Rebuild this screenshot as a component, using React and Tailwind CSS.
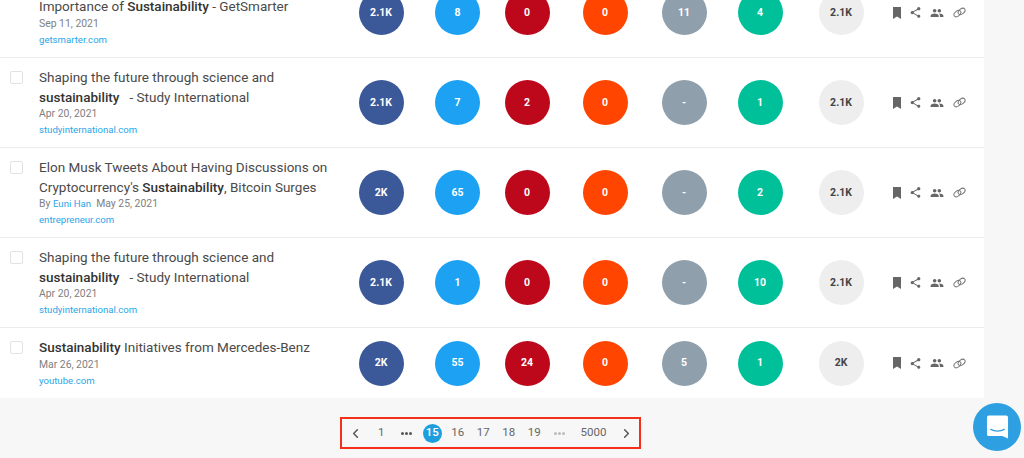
import React from 'react';
import { MdShare, MdPeople } from 'react-icons/md';
import { ChevronLeft, ChevronRight } from 'lucide-react';

const rows = [
  {
    title: <>Importance of <b>Sustainability</b> - GetSmarter</>,
    date: 'Sep 11, 2021',
    domain: 'getsmarter.com',
    stats: ['2.1K', '8', '0', '0', '11', '4', '2.1K'],
    first: true,
  },
  {
    title: <>Shaping the future through science and <b>sustainability</b> &nbsp; - Study International</>,
    date: 'Apr 20, 2021',
    domain: 'studyinternational.com',
    stats: ['2.1K', '7', '2', '0', '-', '1', '2.1K'],
  },
  {
    title: <>Elon Musk Tweets About Having Discussions on Cryptocurrency's <b>Sustainability</b>, Bitcoin Surges</>,
    author: 'Euni Han',
    date: 'May 25, 2021',
    domain: 'entrepreneur.com',
    stats: ['2K', '65', '0', '0', '-', '2', '2.1K'],
  },
  {
    title: <>Shaping the future through science and <b>sustainability</b> &nbsp; - Study International</>,
    date: 'Apr 20, 2021',
    domain: 'studyinternational.com',
    stats: ['2.1K', '1', '0', '0', '-', '10', '2.1K'],
  },
  {
    title: <><b>Sustainability</b> Initiatives from Mercedes-Benz</>,
    date: 'Mar 26, 2021',
    domain: 'youtube.com',
    stats: ['2K', '55', '24', '0', '5', '1', '2K'],
    last: true,
  },
];

const circleColors = [
  'bg-[#3b5998] text-white',
  'bg-[#1da1f2] text-white',
  'bg-[#bd081c] text-white',
  'bg-[#ff4500] text-white',
  'bg-[#8f9fac] text-white',
  'bg-[#00c09a] text-white',
  'bg-[#eeeeee] text-[#444444]',
];

function BookmarkIcon() {
  return (
    <svg width="8" height="12" viewBox="0 0 8 12">
      <path d="M0 0h8v12L4 9.6 0 12z" fill="currentColor" />
    </svg>
  );
}

function ChainIcon() {
  return (
    <svg width="13" height="11" viewBox="0 0 13 11" fill="none" stroke="#777777" strokeWidth="1">
      <ellipse cx="4.4" cy="6.6" rx="3.9" ry="2.5" transform="rotate(-38 4.4 6.6)" />
      <ellipse cx="8.6" cy="4.4" rx="3.9" ry="2.5" transform="rotate(-38 8.6 4.4)" />
    </svg>
  );
}

function Row({ row }) {
  return (
    <div
      className={`grid grid-cols-[342px_78px_75px_64px_92px_66px_86px_76px_105px] items-stretch ${
        row.first ? '-mt-[32px] h-[90px] border-b border-[#ececec]' : row.last ? 'h-[70px]' : 'h-[90px] border-b border-[#ececec]'
      }`}
    >
      <div className={`flex pl-[10px] ${row.first ? 'pt-[29px]' : 'pt-[10px]'}`}>
        <div className={`mt-[3px] h-[13px] w-[13px] shrink-0 rounded-[2px] border border-[#e2e2e2] ${row.first ? 'invisible' : ''}`} />
        <div className="ml-[16px] w-[296px]">
          <div className="text-[13.5px] leading-[19.5px] text-[#4a4a4a] [&_b]:font-medium [&_b]:text-[#333333]">{row.title}</div>
          <div className="-mt-[1px] text-[10.4px] leading-[16px] text-[#808080]">
            {row.author && (
              <>
                By <span className="text-[9.6px] text-[#2aa5e8]">{row.author}</span>&nbsp;&nbsp;
              </>
            )}
            {row.date}
          </div>
          <div className="text-[9.6px] leading-[16px] text-[#2aa5e8]">{row.domain}</div>
        </div>
      </div>
      {row.stats.map((value, i) => (
        <div key={i} className="flex items-center justify-center">
          <div className={`flex h-[45px] w-[45px] items-center justify-center rounded-full text-[10.5px] font-bold ${circleColors[i]}`}>
            {value}
          </div>
        </div>
      ))}
      <div className="flex items-center pl-[9px] text-[#666666]">
        <div className="flex w-[18px] justify-center"><BookmarkIcon /></div>
        <div className="flex w-[18px] justify-center"><MdShare size={13} /></div>
        <div className="flex w-[25px] justify-center"><MdPeople size={14} /></div>
        <div className="flex w-[21px] justify-center"><ChainIcon /></div>
      </div>
    </div>
  );
}

function Dots({ light }) {
  return (
    <div className="flex w-[25.5px] justify-center gap-[1px]">
      <span className={`h-[3px] w-[3px] rounded-full ${light ? 'bg-[#bbbbbb]' : 'bg-[#555555]'}`} />
      <span className={`h-[3px] w-[3px] rounded-full ${light ? 'bg-[#bbbbbb]' : 'bg-[#555555]'}`} />
      <span className={`h-[3px] w-[3px] rounded-full ${light ? 'bg-[#bbbbbb]' : 'bg-[#555555]'}`} />
    </div>
  );
}

function Page({ n, active }) {
  return (
    <div className="flex w-[25.5px] justify-center">
      {active ? (
        <span className="flex h-[19px] w-[19px] items-center justify-center rounded-full bg-[#1f9ede] font-medium text-white">{n}</span>
      ) : (
        n
      )}
    </div>
  );
}

export default function App() {
  return (
    <div className="relative h-[458px] w-[1024px] overflow-hidden bg-[#f7f7f7] font-['Roboto',sans-serif]">
      <div className="w-[984px] bg-white">
        {rows.map((row, i) => (
          <Row key={i} row={row} />
        ))}
      </div>

      <div className="ml-[340px] mt-[19px] flex h-[32px] w-[301px] items-center border-2 border-[#f4301a] text-[11.5px] text-[#666666]">
        <div className="flex w-[26.5px] justify-center text-[#555555]"><ChevronLeft size={15} strokeWidth={2.4} /></div>
        <Page n="1" />
        <Dots />
        <Page n="15" active />
        <Page n="16" />
        <Page n="17" />
        <Page n="18" />
        <Page n="19" />
        <Dots light />
        <div className="flex w-[42px] justify-center">5000</div>
        <div className="flex w-[24.5px] justify-center text-[#555555]"><ChevronRight size={15} strokeWidth={2.4} /></div>
      </div>

      {/* chat widget */}
      <div className="absolute left-[973px] top-[403px] flex h-[48px] w-[48px] items-center justify-center rounded-full bg-[#2e9fe0]">
        <svg width="23" height="26" viewBox="0 0 24 26">
          <path d="M3 1h18a2 2 0 0 1 2 2v22l-6-2.5H3a2 2 0 0 1-2-2V3a2 2 0 0 1 2-2z" fill="#fff" />
          <path d="M5 15.5c4 2.4 10 2.4 14 0" fill="none" stroke="#2e9fe0" strokeWidth="1.4" strokeLinecap="round" />
        </svg>
      </div>
    </div>
  );
}
